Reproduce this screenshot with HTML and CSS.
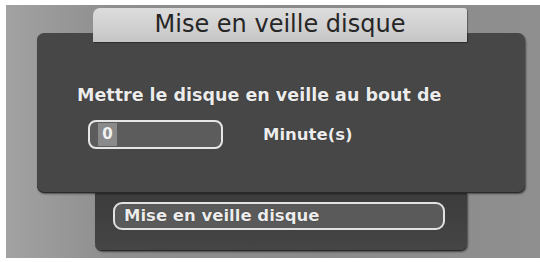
FILE: index.html
```html
<!DOCTYPE html>
<html>
<head>
<meta charset="utf-8">
<link rel="stylesheet" href="styles.css">
</head>
<body>
<div class="screen">
  <div class="tab">Mise en veille disque</div>
  <div class="panel">
    <div class="label">Mettre le disque en veille au bout de</div>
    <div class="row">
      <div class="field"><span class="cursor">0</span></div>
      <span class="unit">Minute(s)</span>
    </div>
  </div>
  <div class="subpanel">
    <div class="button">Mise en veille disque</div>
  </div>
</div>
</body>
</html>
```
FILE: styles.css
```css
html, body {
  margin: 0;
  padding: 0;
  background: #ffffff;
}
body {
  width: 540px;
  height: 262px;
  overflow: hidden;
  font-family: "DejaVu Sans", "Open Sans", sans-serif;
}
.screen {
  margin: 5px 0 0 6px;
  width: 534px;
  height: 253px;
  background: linear-gradient(90deg, #a2a2a2 0%, #8e8e8e 20%, #8a8a8a 60%, #8f8f8f 100%);
  display: flex;
  flex-direction: column;
  align-items: flex-start;
}
.tab {
  position: relative;
  z-index: 2;
  margin: 3px 0 0 87px;
  width: 374px;
  height: 34px;
  box-sizing: border-box;
  background: linear-gradient(180deg, #dcdcdc 0%, #d0d0d0 60%, #c4c4c4 100%);
  border-radius: 7px 3px 0 0;
  color: #262626;
  font-size: 24px;
  line-height: 32px;
  text-align: center;
  box-shadow: 1px 1px 1px rgba(0,0,0,0.35);
}
.panel {
  position: relative;
  z-index: 1;
  margin: -9px 0 0 31px;
  width: 488px;
  height: 159px;
  box-sizing: border-box;
  background: #474747;
  border-radius: 7px;
  box-shadow: 0 1px 0 #2a2a2a, 1px 2px 2px rgba(0,0,0,0.5);
  padding: 50px 0 0 40px;
  color: #ececec;
}
.label {
  font-size: 17.5px;
  font-weight: bold;
  line-height: 24px;
  text-shadow: 0 0 1px #1e1e1e;
}
.row {
  display: flex;
  align-items: center;
  margin-top: 13px;
  margin-left: 11px;
}
.field {
  width: 135px;
  height: 29px;
  box-sizing: border-box;
  border: 2px solid #e6e6e6;
  border-radius: 8px;
  background: #5c5c5c;
  display: flex;
  align-items: center;
  padding-left: 8px;
}
.cursor {
  display: block;
  width: 19px;
  height: 23px;
  background: #8a8a8a;
  color: #f2f2f2;
  font-size: 15px;
  font-weight: bold;
  line-height: 23px;
  text-align: center;
}
.unit {
  margin-left: 40px;
  font-size: 16.5px;
  font-weight: bold;
  text-shadow: 0 0 1px #1e1e1e;
}
.subpanel {
  margin: 0 0 0 89px;
  width: 372px;
  height: 58px;
  box-sizing: border-box;
  background: linear-gradient(180deg, #3c3c3c 0%, #454545 100%);
  border-radius: 0 0 7px 7px;
  box-shadow: 0 1px 0 #2a2a2a, 1px 2px 2px rgba(0,0,0,0.5);
  padding: 10px 0 0 18px;
}
.button {
  width: 332px;
  height: 28px;
  box-sizing: border-box;
  border: 2px solid #e2e2e2;
  border-radius: 9px;
  background: #5a5a5a;
  color: #ececec;
  font-size: 16.5px;
  font-weight: bold;
  line-height: 24px;
  padding-left: 9px;
  text-shadow: 0 0 1px #1e1e1e;
}
```
